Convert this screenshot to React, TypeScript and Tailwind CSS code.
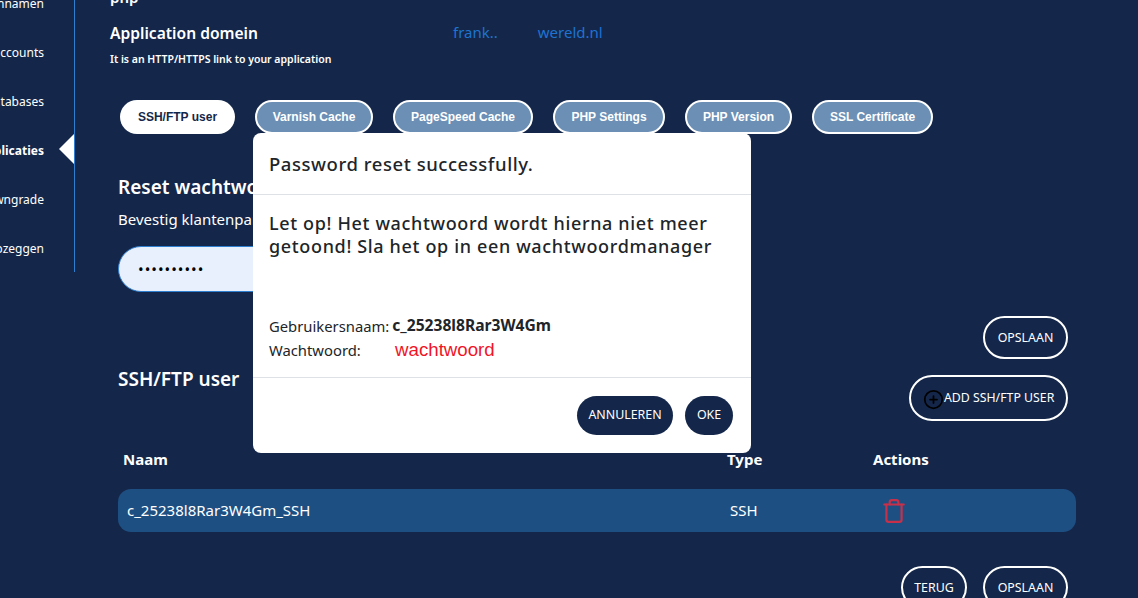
import { Trash, CirclePlus } from "lucide-react";

const sideItems = ["Domeinnamen", "E-mail accounts", "Databases", "Applicaties", "Downgrade", "Opzeggen"];
const tabs = [
  { label: "Varnish Cache", width: "w-[118px]" },
  { label: "PageSpeed Cache", width: "w-[140px]" },
  { label: "PHP Settings", width: "w-[112px]" },
  { label: "PHP Version", width: "w-[107px]" },
  { label: "SSL Certificate", width: "w-[121px]" },
];

function OutlineButton({ label, className }: { label: string; className: string }) {
  return (
    <button className={`flex items-center justify-center rounded-full border-2 border-white pt-[2px] text-[12.4px] text-white ${className}`}>
      {label}
    </button>
  );
}

export default function App() {
  return (
    <div className="relative flex h-[598px] w-[1138px] overflow-hidden bg-[#14274a] font-['Noto_Sans',sans-serif] text-white">
      {/* sidebar, left part runs off the page */}
      <aside className="relative mt-[-21px] h-[293px] w-[75px] shrink-0 border-r border-[#2f7fd0]">
        <ul className="flex flex-col items-end pr-[30px]">
          {sideItems.map((item) => (
            <li
              key={item}
              className={`flex h-[49px] items-center whitespace-nowrap text-[12px] ${item === "Applicaties" ? "font-bold" : ""}`}
            >
              {item}
            </li>
          ))}
        </ul>
        <div className="absolute right-0 top-[155px] h-0 w-0 border-y-[15px] border-r-[15px] border-y-transparent border-r-white" />
      </aside>

      <main className="flex-1 pl-[35px] pr-[62px]">
        <p className="mt-[-14px] h-[22px] text-[15px] font-semibold leading-[22px]">php</p>
        <div className="mt-[14px] flex h-[22px] items-center">
          <h3 className="mt-[1px] w-[343px] text-[15.6px] font-semibold">Application domein</h3>
          <span className="mt-[-1px] flex text-[15px] text-[#1e73d2]">
            <span>frank..</span>
            <span className="ml-[40px]">wereld.nl</span>
          </span>
        </div>
        <p className="mt-[8px] h-[15px] text-[10.5px] font-semibold leading-[15px]">It is an HTTP/HTTPS link to your application</p>

        <div className="ml-[10px] mt-[33px] flex gap-[20px] font-['Liberation_Sans',sans-serif] text-[12px] font-bold">
          <button className="flex h-[34px] w-[115px] items-center justify-center rounded-full bg-white text-[#14274a]">SSH/FTP user</button>
          {tabs.map((tab) => (
            <button key={tab.label} className={`flex h-[34px] items-center justify-center rounded-full border-2 border-white bg-[#6b8fb5] ${tab.width}`}>
              {tab.label}
            </button>
          ))}
        </div>

        <div className="ml-[8px]">
          <h2 className="mt-[40px] h-[26px] text-[19px] font-semibold leading-[26px]">Reset wachtwoord</h2>
          <p className="mt-[8px] h-[22px] text-[15px] leading-[22px]">Bevestig klantenpaneel wachtwoord</p>
          <div className="mt-[16px] flex h-[46px] w-[400px] items-center rounded-full border border-[#2f7fd0] bg-[#e8f0fe] pl-[19px] text-[15px] tracking-[1px] text-black">
            ••••••••••
          </div>

          <div className="mt-[24px] flex justify-end pr-[8px]">
            <OutlineButton label="OPSLAAN" className="h-[43px] w-[85px]" />
          </div>
          <div className="mt-[16px] flex h-[46px] items-center justify-between pr-[8px]">
            <h2 className="mt-[-38px] text-[19px] font-semibold leading-[26px]">SSH/FTP user</h2>
            <button className="flex h-[46px] w-[159px] items-center rounded-full border-2 border-white pl-[12px] text-[12.3px]">
              <CirclePlus className="mt-[2px] h-[21px] w-[21px] shrink-0 text-black" strokeWidth={2} />
              <span>ADD SSH/FTP USER</span>
            </button>
          </div>

          <div className="mt-[26px] flex h-[24px] items-center text-[15px] font-bold">
            <span className="ml-[5px] w-[604px]">Naam</span>
            <span className="w-[146px]">Type</span>
            <span>Actions</span>
          </div>
          <div className="mt-[18px] flex h-[43px] items-center rounded-[13px] bg-[#1e4f82] text-[15px]">
            <span className="ml-[9px] w-[603px]">c_25238l8Rar3W4Gm_SSH</span>
            <span className="w-[151px]">SSH</span>
            <Trash className="h-[26px] w-[26px] text-[#c8304a]" strokeWidth={2} />
          </div>

          <div className="mt-[34px] flex justify-end gap-[16px] pr-[8px]">
            <OutlineButton label="TERUG" className="h-[43px] w-[66px]" />
            <OutlineButton label="OPSLAAN" className="h-[43px] w-[85px]" />
          </div>
        </div>
      </main>

      {/* dialog */}
      <div className="absolute left-[253px] top-[133px] flex h-[320px] w-[498px] flex-col rounded-[8px] bg-white text-[#212529]">
        <div className="flex h-[62px] items-center border-b border-[#dee2e6] px-[16px]">
          <h5 className="mt-[1px] text-[18.5px] font-medium tracking-[0.55px]">Password reset successfully.</h5>
        </div>
        <div className="flex-1 px-[16px] pt-[17px]">
          <p className="text-[18px] font-medium leading-[23px] tracking-[0.65px]">
            Let op! Het wachtwoord wordt hierna niet meer getoond! Sla het op in een wachtwoordmanager
          </p>
          <div className="mt-[56px] flex h-[24px] items-center text-[14.8px]">
            <span>Gebruikersnaam:</span>
            <b className="ml-[3px] text-[15.6px]">c_25238l8Rar3W4Gm</b>
          </div>
          <div className="flex h-[24px] items-center text-[14.8px]">
            <span className="w-[126px]">Wachtwoord:</span>
            <span className="font-['Liberation_Sans',sans-serif] text-[18.7px] text-[#f01428]">wachtwoord</span>
          </div>
        </div>
        <div className="flex h-[76px] items-center justify-end gap-[12px] border-t border-[#dee2e6] pr-[18px]">
          <button className="h-[39px] w-[96px] rounded-full bg-[#14274a] text-[12.4px] text-white">ANNULEREN</button>
          <button className="h-[39px] w-[48px] rounded-full bg-[#14274a] text-[12.4px] text-white">OKE</button>
        </div>
      </div>
    </div>
  );
}
